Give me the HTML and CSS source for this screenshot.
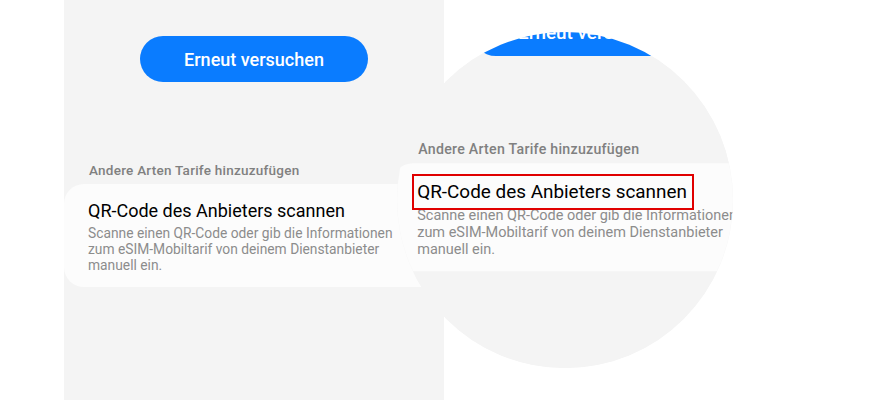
FILE: index.html
```html
<!DOCTYPE html>
<html>
<head>
    <meta charset="utf-8">
    <title>eSIM hinzufügen</title>
    <link rel="stylesheet" href="styles.css">
</head>
<body>
    <div class="page">
        <div class="screen">
            <button class="retry">Erneut versuchen</button>
            <p class="section-label">Andere Arten Tarife hinzuzufügen</p>
            <div class="option-card">
                <div class="option-title">QR-Code des Anbieters scannen</div>
                <div class="option-desc">Scanne einen QR-Code oder gib die Informationen zum eSIM-Mobiltarif von deinem Dienstanbieter manuell ein.</div>
            </div>
        </div>

        <!-- magnifier over the card -->
        <div class="lens">
            <div class="screen">
                <button class="retry">Erneut versuchen</button>
                <p class="section-label">Andere Arten Tarife hinzuzufügen</p>
                <div class="option-card">
                    <div class="option-title">QR-Code des Anbieters scannen</div>
                    <div class="option-desc">Scanne einen QR-Code oder gib die Informationen zum eSIM-Mobiltarif von deinem Dienstanbieter manuell ein.</div>
                </div>
            </div>
        </div>
        <div class="highlight"></div>
    </div>
</body>
</html>
```

FILE: styles.css
```css
body {
    margin: 0;
    background-color: #fff;
    font-family: Roboto, "Noto Sans", sans-serif;
    overflow: hidden;
}

.page {
    position: relative;
    height: 400px;
}

.screen {
    width: 380px;
    height: 400px;
    margin-left: 64px;
    padding-top: 36px;
    box-sizing: border-box;
    background-color: #f4f4f4;
    display: flex;
    flex-direction: column;
}

.retry {
    align-self: center;
    width: 228px;
    height: 46px;
    border: none;
    border-radius: 23px;
    background-color: #0a7cff;
    color: white;
    font-family: Roboto, sans-serif;
    font-size: 18px;
    font-weight: 500;
}

.section-label {
    margin: 80px 0 6px 25px;
    font-size: 13.5px;
    font-weight: 500;
    letter-spacing: 0.25px;
    line-height: 16px;
    color: #808080;
}

.option-card {
    background-color: #fcfcfc;
    border-radius: 20px;
    padding: 15px 36px 14px 24px;
}

.option-title {
    font-size: 18px;
    line-height: 24px;
    color: #000;
}

.option-desc {
    margin-top: 2px;
    font-size: 13.8px;
    line-height: 16px;
    color: #8c8c8c;
}

.lens {
    position: absolute;
    left: 397px;
    top: 32px;
    width: 336px;
    height: 336px;
    border-radius: 50%;
    overflow: hidden;
    background-color: #f4f4f4;
}

.lens .screen {
    position: absolute;
    left: -5px;
    top: -62px;
    margin: 0;
    transform: scale(1.05);
    transform-origin: 0 0;
}

.highlight {
    position: absolute;
    left: 412px;
    top: 174px;
    width: 278px;
    height: 32px;
    border: 2px solid #e00000;
}
```
